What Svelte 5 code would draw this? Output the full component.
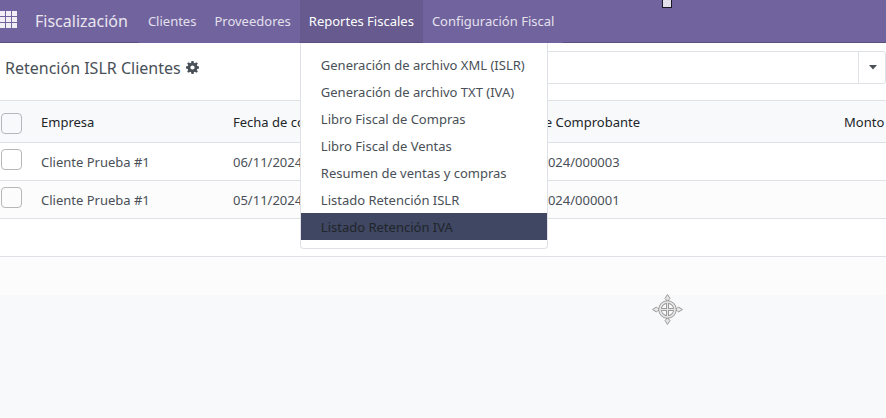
<script lang="ts">
  const sections = ['Clientes', 'Proveedores', 'Reportes Fiscales', 'Configuración Fiscal'];

  const reports = [
    'Generación de archivo XML (ISLR)',
    'Generación de archivo TXT (IVA)',
    'Libro Fiscal de Compras',
    'Libro Fiscal de Ventas',
    'Resumen de ventas y compras',
    'Listado Retención ISLR',
    'Listado Retención IVA'
  ];

  const rows = [
    { company: 'Cliente Prueba #1', date: '06/11/2024', number: 'RET-ISLR/2024/000003' },
    { company: 'Cliente Prueba #1', date: '05/11/2024', number: 'RET-ISLR/2024/000001' }
  ];

  let openSection = $state('Reportes Fiscales');
  let active = $state('Listado Retención IVA');

  const toggle = (section: string) => {
    openSection = openSection === section ? '' : section;
  };
</script>

<div class="app">
  <nav class="navbar">
    <button class="navbar__apps" type="button" aria-label="Aplicaciones">
      <svg width="17" height="17" viewBox="0 0 17 17" fill="#f1eff5" shape-rendering="crispEdges">
        {#each [0, 6, 12] as y}
          {#each [0, 6, 12] as x}
            <rect {x} {y} width="5" height="5" />
          {/each}
        {/each}
      </svg>
    </button>
    <a class="navbar__brand" href="#inicio">Fiscalización</a>
    {#each sections as section}
      <div class="navbar__entry">
        <button
          class="navbar__link"
          class:navbar__link--open={openSection === section}
          type="button"
          aria-expanded={openSection === section}
          onclick={() => toggle(section)}
        >
          {section}
        </button>
        {#if section === 'Reportes Fiscales' && openSection === section}
          <div class="menu">
            {#each reports as report}
              <a
                class="menu__item"
                class:menu__item--active={active === report}
                href="#reporte"
                onmouseenter={() => (active = report)}
              >
                {report}
              </a>
            {/each}
          </div>
        {/if}
      </div>
    {/each}
    <span class="handle"></span>
  </nav>

  <header class="panel">
    <div class="panel__title">
      <h1>Retención ISLR Clientes</h1>
      <button class="panel__gear" type="button" aria-label="Acciones">
        <svg width="13" height="13" viewBox="0 0 16 16" fill="#495057">
          <path
            fill-rule="evenodd"
            d="M6.7 0h2.6l.4 2.2 1.3.5 1.8-1.3 1.8 1.8L13.3 5l.5 1.3 2.2.4v2.6l-2.2.4-.5 1.3 1.3 1.8-1.8 1.8-1.8-1.3-1.3.5-.4 2.2H6.7l-.4-2.2-1.3-.5-1.8 1.3-1.8-1.8L2.7 11l-.5-1.3L0 9.3V6.7l2.2-.4L2.7 5 1.4 3.2l1.8-1.8L5 2.7l1.3-.5zM8 5.4a2.6 2.6 0 1 0 0 5.2 2.6 2.6 0 0 0 0-5.2z"
          />
        </svg>
      </button>
    </div>
    <div class="search">
      <input class="search__input" type="text" aria-label="Buscar" />
      <button class="search__toggle" type="button" aria-label="Opciones de búsqueda">
        <svg width="8" height="5" viewBox="0 0 8 5" fill="#495057"><path d="M0 0h8L4 4.5z" /></svg>
      </button>
    </div>
  </header>

  <table class="list">
    <colgroup>
      <col class="list__check" />
      <col class="list__company" />
      <col class="list__date" />
      <col class="list__number" />
      <col />
    </colgroup>
    <thead>
      <tr>
        <th><input type="checkbox" aria-label="Seleccionar todo" /></th>
        <th>Empresa</th>
        <th>Fecha de comprobante</th>
        <th>Número de Comprobante</th>
        <th>Monto</th>
      </tr>
    </thead>
    <tbody>
      {#each rows as row}
        <tr>
          <td><input type="checkbox" aria-label={`Seleccionar ${row.number}`} /></td>
          <td>{row.company}</td>
          <td>{row.date}</td>
          <td>{row.number}</td>
          <td></td>
        </tr>
      {/each}
      <tr><td colspan="5"></td></tr>
      <tr><td colspan="5"></td></tr>
    </tbody>
  </table>

  <svg class="pointer" width="31" height="31" viewBox="0 0 31 31" fill="none" stroke="#9a9a9a" aria-hidden="true">
    <g fill="#e6e6e6">
      <path d="M15.5 .5l2.500 4-1.500 1.500v3h-2v-3L13 4.500z" />
      <path d="M15.500 30.500l2.500-4-1.500-1.500v-3h-2v3L13 26.500z" />
      <path d="M.5 15.500l4-2.500L6 14.500h3v2H6L4.500 18z" />
      <path d="M30.500 15.500l-4-2.500-1.500 1.500h-3v2h3l1.500 1.500z" />
    </g>
    <circle cx="15.500" cy="15.500" r="7.500" stroke-width="3.500" />
    <path d="M15.500 9v13M9 15.500h13" stroke-width="3" />
    <circle cx="15.500" cy="15.500" r="7.500" stroke="#e6e6e6" stroke-width="1.700" />
    <path d="M15.500 8v15M8 15.500h15" stroke="#e6e6e6" stroke-width="1" />
  </svg>
</div>

<style>
  :global(body) {
    background: #f8f9fb;
    margin: 0;
  }

  .app {
    color: #495057;
    font-family: 'Noto Sans', 'Open Sans', sans-serif;
    font-size: 13px;
    line-height: 19px;
    overflow: hidden;
    position: relative;
  }

  button,
  input {
    font: inherit;
    margin: 0;
  }

  button {
    background: none;
    border: 0;
    cursor: pointer;
    padding: 0;
  }

  a {
    text-decoration: none;
  }

  svg {
    display: block;
  }

  .navbar {
    background: #71639e;
    box-shadow: inset 0 -1px #5a4f7f;
    display: flex;
    height: 43px;
    position: relative;
  }

  .navbar__apps {
    padding-bottom: 4px;
  }

  .navbar__brand {
    align-self: center;
    color: #e9e6f0;
    font-size: 16px;
    padding: 0 11px 0 18px;
  }

  .navbar__entry {
    background: #71639e;
    position: relative;
  }

  .navbar__link {
    color: #e3e0ec;
    height: 100%;
    padding: 0 9px;
    white-space: nowrap;
  }

  .navbar__link--open {
    background: #665a8e;
    box-shadow: inset 0 -1px #5a4f7f;
    color: #fff;
  }

  .handle {
    background: #e3e0ec;
    border: 1px solid #1b1825;
    border-top: 0;
    height: 7px;
    left: 662px;
    position: absolute;
    top: 0;
    width: 8px;
  }

  .menu {
    background: #fff;
    border: 1px solid #dee2e6;
    border-radius: 0 0 4px 4px;
    border-top: 0;
    left: 0;
    padding: 8px 0;
    position: absolute;
    top: 100%;
    z-index: 10;
  }

  .menu__item {
    color: #495057;
    display: block;
    line-height: 25px;
    padding: 2px 22px 0 20px;
    white-space: nowrap;
  }

  .menu__item--active {
    background: #3f4763;
    color: #212529;
  }

  .panel {
    background: #fff;
    display: flex;
    justify-content: space-between;
    padding: 8px 0 16px 5px;
  }

  .panel__title {
    align-items: center;
    display: flex;
    gap: 5px;
  }

  .panel h1 {
    font-size: 16px;
    font-weight: 400;
    margin: 0;
    padding-top: 2px;
  }

  .search {
    border: 1px solid #dee2e6;
    border-radius: 3px;
    box-sizing: border-box;
    display: flex;
    height: 33px;
    width: 50%;
  }

  .search__input {
    background: none;
    border: 0;
    flex: 1;
    min-width: 0;
    outline: 0;
    padding: 0 8px;
  }

  .search__toggle {
    border-left: 1px solid #dee2e6;
    padding: 0 8px 0 10px;
  }

  .list {
    border-collapse: separate;
    border-spacing: 0;
    table-layout: fixed;
    width: 100%;
  }

  .list__check {
    width: 33px;
  }

  .list__company {
    width: 192px;
  }

  .list__date {
    width: 250px;
  }

  .list__number {
    width: 361px;
  }

  th,
  td {
    box-sizing: border-box;
    height: 38px;
    padding: 2px 8px 0;
    text-align: left;
    vertical-align: middle;
    white-space: nowrap;
  }

  th {
    background: #f8f9fb;
    border-bottom: 1px solid #dee2e6;
    border-top: 1px solid #dee2e6;
    color: #212529;
    font-weight: 400;
    height: 43px;
  }

  td {
    background: #fff;
    border-bottom: 1px solid #dee2e6;
  }

  tbody tr:nth-child(even) td {
    background: #fcfcfc;
  }

  tbody tr:last-child td {
    border-bottom: 0;
  }

  th:first-child {
    padding: 4px 0 0 1px;
  }

  td:first-child {
    padding: 0 0 4px 1px;
  }

  input[type='checkbox'] {
    appearance: none;
    background: transparent;
    border: 1px solid #b5b7ba;
    border-radius: 4px;
    display: block;
    height: 21px;
    width: 21px;
  }

  input[type='checkbox']:checked {
    background: #71639e;
  }

  .pointer {
    left: 652px;
    pointer-events: none;
    position: fixed;
    top: 294px;
  }
</style>
